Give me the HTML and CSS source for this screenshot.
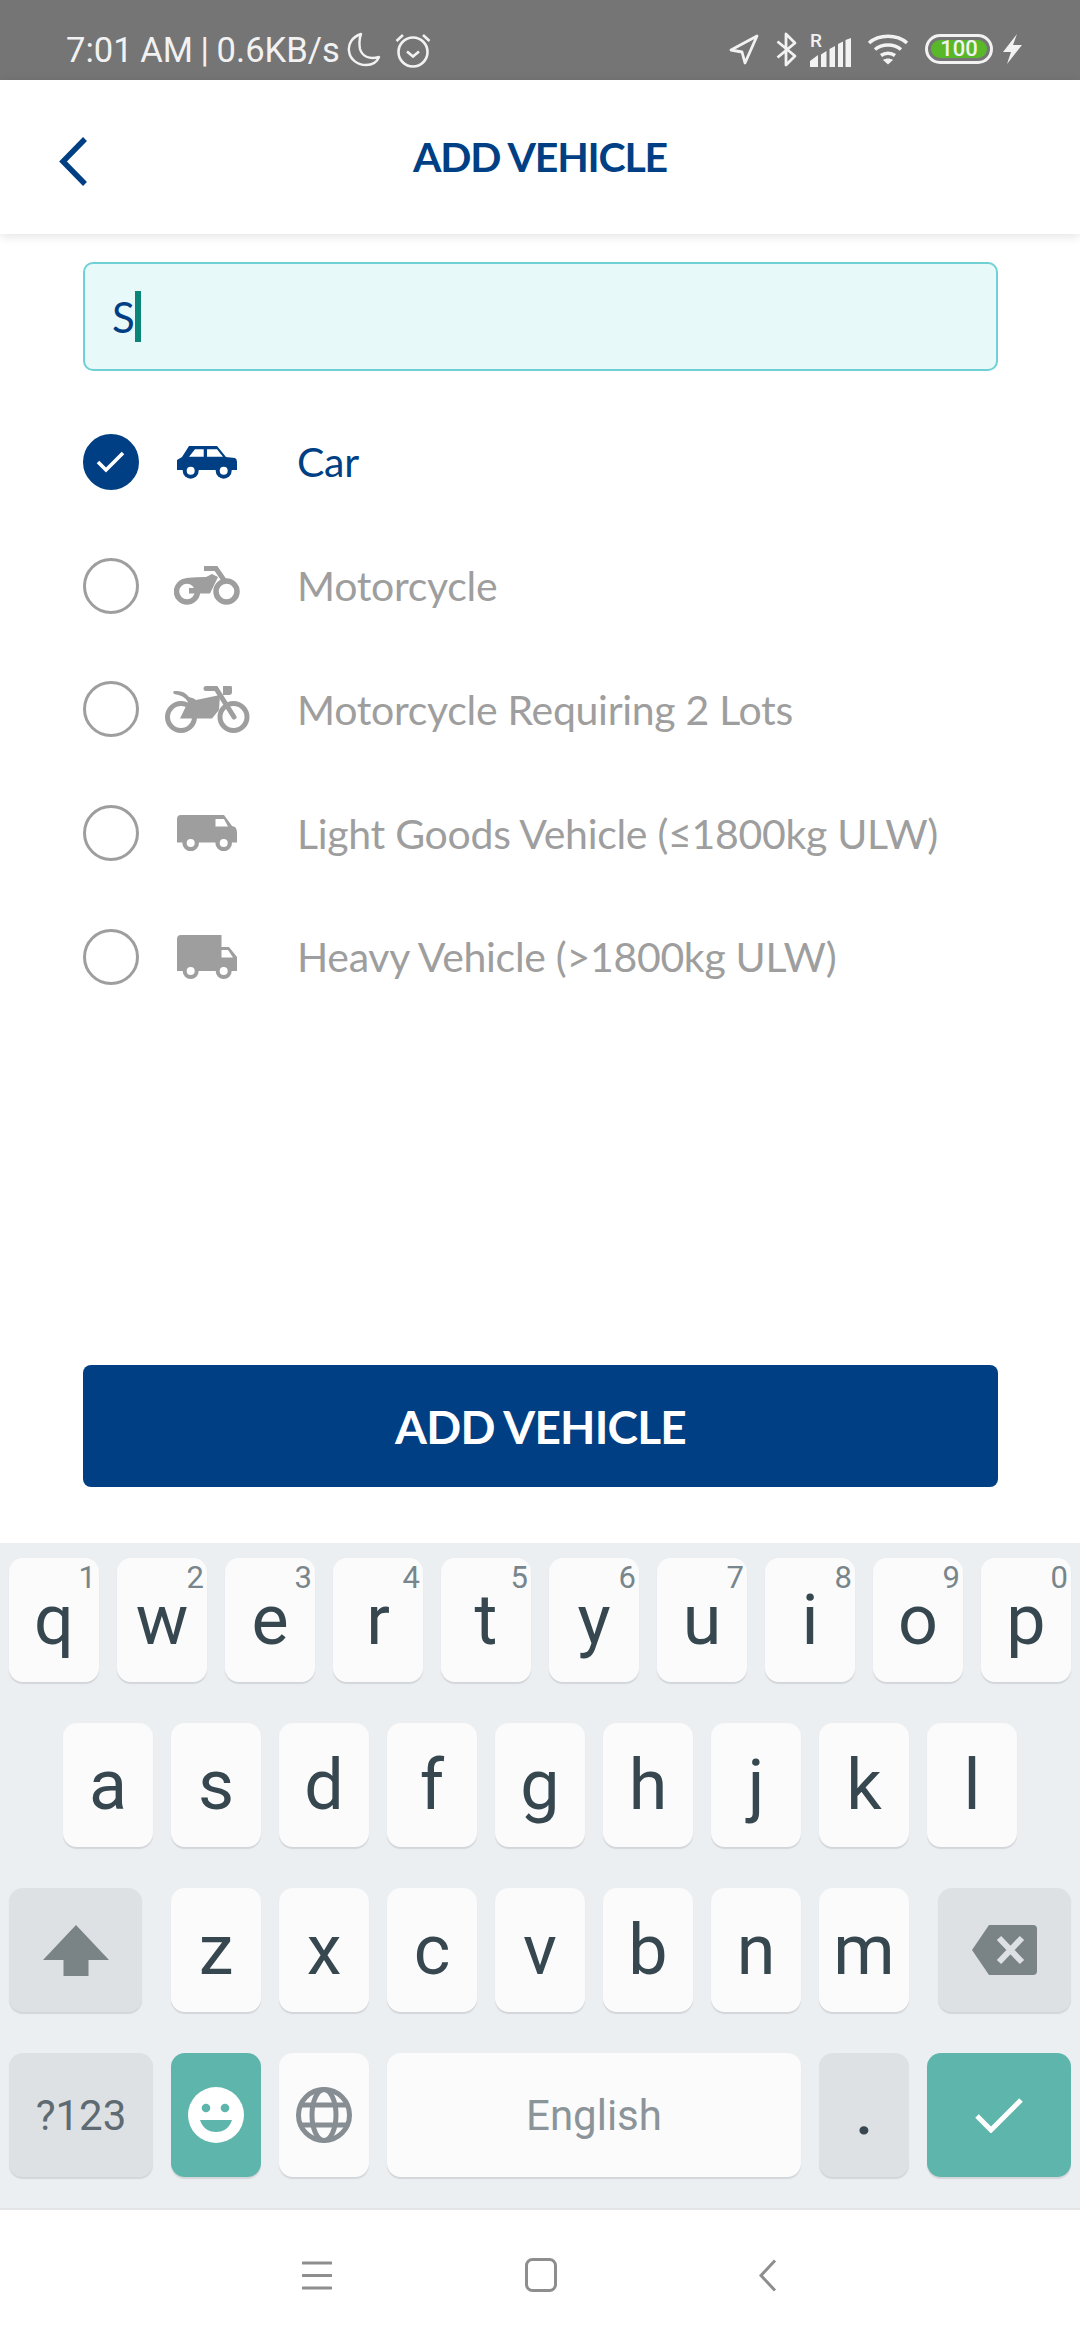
FILE: index.html
```html
<!DOCTYPE html>
<html lang="en">
<head>
    <meta charset="UTF-8">
    <meta name="viewport" content="width=device-width, initial-scale=1.0">
    <title>Add Vehicle</title>
    <link rel="stylesheet" href="styles.css">
</head>
<body>

<div class="statusbar">
    <div class="status-left">
        <span class="status-text">7:01 AM | 0.6KB/s</span>
        <svg class="ic-moon" width="34" height="35" viewBox="0 0 34 35"><path d="M14 2 C5 5 1 12 2 19 C3 28 11 33 19 33 C25 33 30 30 32 25 C22 28 15 24 13 17 C12 11 12 7 14 2 Z" fill="none" stroke="#f2f2f2" stroke-width="2.4" stroke-linejoin="round"/></svg>
        <svg class="ic-alarm" width="36" height="36" viewBox="0 0 36 36"><circle cx="18" cy="20" r="14.5" fill="none" stroke="#f2f2f2" stroke-width="2.6"/><path d="M12 19.5 L18 24.5 L24 19.5" fill="none" stroke="#f2f2f2" stroke-width="2.6"/><path d="M1.5 9 L8 3 M34.5 9 L28 3" stroke="#f2f2f2" stroke-width="2.6"/></svg>
    </div>
    <div class="status-right">
        <svg width="30" height="31" viewBox="0 0 30 31"><path d="M28 2 L2 16 L13 18 L16 29 Z" fill="none" stroke="#f2f2f2" stroke-width="2.8" stroke-linejoin="round"/></svg>
        <svg class="ic-bt" width="21" height="35" viewBox="0 0 21 35"><path d="M1.5 9.5 L19 24 L10 33 L10 2 L19 11 L1.5 25.5" fill="none" stroke="#f2f2f2" stroke-width="2.8" stroke-linejoin="round"/></svg>
        <div class="signal">
            <span class="signal-r">R</span>
            <svg width="42" height="29" viewBox="0 0 42 29"><path d="M0 29 V23 L8 17 V29 Z M11 29 V16.5 L16.5 13 V29 Z M19.5 29 V11 L25 8 V29 Z M28 29 V6 L33 3.5 V29 Z M35.5 29 V2 L41 0 V29 Z" fill="#f2f2f2"/></svg>
        </div>
        <svg class="ic-wifi" width="42" height="31" viewBox="0 0 42 31"><path d="M2 9 C12 0 30 0 40 9 M8 15.5 C15 9.5 27 9.5 34 15.5 M14 21.5 C18 18.5 24 18.5 28 21.5" fill="none" stroke="#f2f2f2" stroke-width="3.6"/><path d="M21 30.5 L16 26 C19 24 23 24 26 26 Z" fill="#f2f2f2"/></svg>
        <div class="battery"><span class="battery-fill">100</span></div>
        <svg class="ic-bolt" width="19" height="30" viewBox="0 0 19 30"><path d="M14 0 L0 18 L8 18 L4 30 L19 11 L10 11 Z" fill="#f2f2f2"/></svg>
    </div>
</div>

<header class="topbar">
    <svg class="back" width="30" height="52" viewBox="0 0 30 52"><polyline points="27,3 5,25.5 27,48" fill="none" stroke="#003f83" stroke-width="5.5"/></svg>
    <h1>ADD VEHICLE</h1>
</header>

<main class="content">
    <div class="search"><span class="search-value">S</span><span class="caret"></span></div>

    <ul class="vehicles">
        <li class="vehicle selected">
            <span class="radio"><svg width="30" height="24" viewBox="0 0 30 24"><polyline points="2,12 10,20 27,3" fill="none" stroke="#fff" stroke-width="3.6"/></svg></span>
            <span class="vehicle-icon">
                <svg width="60" height="34" viewBox="0 0 60 34"><path d="M12 1 H40 L49 12 L58 13 Q60 14 60 17 V25 H0 V15 L5 12 Z" fill="#003f83"/><path d="M12 11.7 L18 4.3 H26.7 V11.7 Z M30 4.3 H40 L46 11.7 H30 Z" fill="#fff"/><circle cx="13.7" cy="25.7" r="8" fill="#003f83"/><circle cx="13.7" cy="25.7" r="4" fill="#fff"/><circle cx="46.7" cy="25.7" r="8" fill="#003f83"/><circle cx="46.7" cy="25.7" r="4" fill="#fff"/></svg>
            </span>
            <span class="vehicle-name">Car</span>
        </li>
        <li class="vehicle">
            <span class="radio"></span>
            <span class="vehicle-icon">
                <svg width="66" height="39" viewBox="0 0 66 39"><circle cx="13" cy="25.5" r="10.5" fill="none" stroke="#9e9e9e" stroke-width="5.5"/><circle cx="52.5" cy="25.5" r="10.5" fill="none" stroke="#9e9e9e" stroke-width="5.5"/><path d="M12 12 Q22 11 32 11 L38 8 L44 11 L36 27.5 H15 V22 H22 V17 H12 Z" fill="#9e9e9e"/><path d="M30 2.5 H42 L52 17" fill="none" stroke="#9e9e9e" stroke-width="5"/></svg>
            </span>
            <span class="vehicle-name">Motorcycle</span>
        </li>
        <li class="vehicle">
            <span class="radio"></span>
            <span class="vehicle-icon">
                <svg width="85" height="48" viewBox="0 0 85 48"><circle cx="16" cy="32" r="13.5" fill="none" stroke="#9e9e9e" stroke-width="5"/><circle cx="68.5" cy="32" r="13.5" fill="none" stroke="#9e9e9e" stroke-width="5"/><path d="M24 12 Q29 13 31 15 L55 10 L54 25 L47 33.5 H15 L23 17 Q19 10 9 9 Q7 6 10 6 Q19 5 24 12 Z" fill="#9e9e9e"/><path d="M41 3.5 H51 L69 32" fill="none" stroke="#9e9e9e" stroke-width="5" stroke-linecap="round"/><path d="M58 1 H66 Q67 1 67 3 V7 Q67 10 64 10 H58 Z" fill="#9e9e9e"/></svg>
            </span>
            <span class="vehicle-name">Motorcycle Requiring 2 Lots</span>
        </li>
        <li class="vehicle">
            <span class="radio"></span>
            <span class="vehicle-icon">
                <svg width="60" height="36" viewBox="0 0 60 36"><path d="M4 0 H47 L55 11 L58 12 Q60 14 60 17 V27.5 H0 V4 Q0 0 4 0 Z" fill="#9e9e9e"/><path d="M38.5 4 H47 L51 11.5 H38.5 Z" fill="#fff"/><circle cx="13.7" cy="28" r="8.3" fill="#9e9e9e"/><circle cx="13.7" cy="28" r="4" fill="#fff"/><circle cx="46.7" cy="28" r="8.3" fill="#9e9e9e"/><circle cx="46.7" cy="28" r="4" fill="#fff"/></svg>
            </span>
            <span class="vehicle-name">Light Goods Vehicle (≤1800kg ULW)</span>
        </li>
        <li class="vehicle">
            <span class="radio"></span>
            <span class="vehicle-icon">
                <svg width="60" height="44" viewBox="0 0 60 44"><path d="M4 0 H44.5 V12 H52 L60 22 V36 H0 V4 Q0 0 4 0 Z" fill="#9e9e9e"/><path d="M44.5 15 H51 L56 22.5 H44.5 Z" fill="#fff"/><circle cx="13.7" cy="36" r="8" fill="#9e9e9e"/><circle cx="13.7" cy="36" r="4" fill="#fff"/><circle cx="46.7" cy="36" r="8" fill="#9e9e9e"/><circle cx="46.7" cy="36" r="4" fill="#fff"/></svg>
            </span>
            <span class="vehicle-name">Heavy Vehicle (&gt;1800kg ULW)</span>
        </li>
    </ul>

    <button class="add-btn" type="button">ADD VEHICLE</button>
</main>

<section class="keyboard">
    <div class="kb-row">
        <div class="key">q<span class="hint">1</span></div>
        <div class="key">w<span class="hint">2</span></div>
        <div class="key">e<span class="hint">3</span></div>
        <div class="key">r<span class="hint">4</span></div>
        <div class="key">t<span class="hint">5</span></div>
        <div class="key">y<span class="hint">6</span></div>
        <div class="key">u<span class="hint">7</span></div>
        <div class="key">i<span class="hint">8</span></div>
        <div class="key">o<span class="hint">9</span></div>
        <div class="key">p<span class="hint">0</span></div>
    </div>
    <div class="kb-row kb-row-home">
        <div class="key">a</div>
        <div class="key">s</div>
        <div class="key">d</div>
        <div class="key">f</div>
        <div class="key">g</div>
        <div class="key">h</div>
        <div class="key">j</div>
        <div class="key">k</div>
        <div class="key">l</div>
    </div>
    <div class="kb-row">
        <div class="key key-fn key-shift">
            <svg width="66" height="51" viewBox="0 0 66 51"><path d="M33 0 L66 35 H45.5 V51 H20.5 V35 H0 Z" fill="#7a8487"/></svg>
        </div>
        <div class="key">z</div>
        <div class="key">x</div>
        <div class="key">c</div>
        <div class="key">v</div>
        <div class="key">b</div>
        <div class="key">n</div>
        <div class="key">m</div>
        <div class="key key-fn key-back">
            <svg width="65" height="50" viewBox="0 0 65 50"><path d="M17 0 H61 Q65 0 65 4 V46 Q65 50 61 50 H17 L0 25 Z" fill="#7a8487"/><path d="M27 13 L50 37 M50 13 L27 37" stroke="#dee1e4" stroke-width="6"/></svg>
        </div>
    </div>
    <div class="kb-row">
        <div class="key key-fn key-wide key-label">?123</div>
        <div class="key key-teal">
            <svg width="56" height="56" viewBox="0 0 56 56"><circle cx="28" cy="28" r="28" fill="#fff"/><circle cx="18" cy="21" r="4.3" fill="#5eb5ab"/><circle cx="37" cy="21" r="4.3" fill="#5eb5ab"/><path d="M12 33 H44 Q40 45 28 45 Q16 45 12 33 Z" fill="#5eb5ab"/></svg>
        </div>
        <div class="key">
            <svg width="56" height="56" viewBox="0 0 56 56"><circle cx="28" cy="28" r="25.5" fill="none" stroke="#868e93" stroke-width="5"/><ellipse cx="28" cy="28" rx="12" ry="25.5" fill="none" stroke="#868e93" stroke-width="5"/><path d="M4 18 H52 M4 38 H52" stroke="#868e93" stroke-width="5"/></svg>
        </div>
        <div class="key key-space">English</div>
        <div class="key key-fn key-period">.</div>
        <div class="key key-teal key-wide">
            <svg width="48" height="36" viewBox="0 0 48 36"><polyline points="2,19 16,33 46,3" fill="none" stroke="#fff" stroke-width="5"/></svg>
        </div>
    </div>
</section>

<nav class="navbar">
    <svg class="nav-menu" width="30" height="31" viewBox="0 0 30 31"><path d="M1 3 H29 M1 15.5 H29 M1 28 H29" stroke="#8e8e8e" stroke-width="3" stroke-linecap="round"/></svg>
    <svg class="nav-home" width="32" height="34" viewBox="0 0 32 34"><rect x="1.5" y="1.5" width="29" height="31" rx="6" fill="none" stroke="#8e8e8e" stroke-width="3"/></svg>
    <svg class="nav-back" width="18" height="33" viewBox="0 0 18 33"><polyline points="16,1.5 2,16.5 16,31.5" fill="none" stroke="#8e8e8e" stroke-width="3"/></svg>
</nav>

</body>
</html>
```

FILE: styles.css
```css
* { box-sizing: border-box; }
html, body { margin: 0; padding: 0; }
body { width: 1080px; height: 2340px; display: flex; flex-direction: column; overflow: hidden; background: #fff; font-family: "Lato", sans-serif; }

.statusbar { height: 80px; flex: none; background: #757575; color: #f2f2f2; display: flex; justify-content: space-between; padding: 32px 58px 0 66px; }
.status-left, .status-right { display: flex; align-items: flex-start; }
.status-text { font-family: "Roboto", sans-serif; font-size: 34.6px; line-height: 36px; word-spacing: -1px; }
.ic-moon { margin-left: 7px; }
.ic-alarm { margin-left: 14px; }
.status-right svg { display: block; margin-top: 2px; }
.status-right .ic-bt { margin: 0 0 0 17px; }
.signal { position: relative; width: 42px; height: 34px; margin-left: 13px; }
.signal svg { position: absolute; left: 0; bottom: -1px; }
.signal-r { position: absolute; left: 0; top: -2px; font-family: "Roboto", sans-serif; font-size: 19px; font-weight: 500; line-height: 22px; }
.ic-wifi { margin-left: 15px; }
.battery { width: 68px; height: 30px; margin: 2px 0 0 16px; padding: 3px; border: 3px solid #f2f2f2; border-radius: 15px; }
.battery-fill { display: block; height: 18px; border-radius: 9px; background: #59b82a; color: #f2f2f2; font-family: "Roboto", sans-serif; font-size: 22px; font-weight: 500; line-height: 18px; text-align: center; }
.status-right .ic-bolt { margin-left: 10px; }

.topbar { height: 154px; flex: none; position: relative; z-index: 1; display: flex; align-items: center; justify-content: center; background: #fff; box-shadow: 0 2px 10px rgba(0, 0, 0, 0.12); }
.back { position: absolute; left: 58px; top: 56px; }
.topbar h1 { margin: 0; color: #003f83; font-size: 41px; font-weight: 700; letter-spacing: -1.2px; line-height: 50px; }

.content { height: 1309px; flex: none; display: flex; flex-direction: column; padding: 28px 82px 56px 83px; }
.search { height: 109px; flex: none; display: flex; align-items: center; padding-left: 27px; background: #e8f9fa; border: 2px solid #6fd0d6; border-radius: 10px; color: #003f83; font-size: 42px; }
.caret { width: 6px; height: 51px; background: #0b8577; }

.vehicles { list-style: none; margin: 29px 0 0; padding: 0; }
.vehicle { height: 123.75px; display: flex; align-items: center; color: #9e9e9e; font-size: 41px; letter-spacing: -0.3px; }
.vehicle.selected { color: #003f83; }
.radio { width: 56px; height: 56px; flex: none; display: flex; align-items: center; justify-content: center; border: 3px solid #9e9e9e; border-radius: 50%; }
.selected .radio { background: #003f83; border-color: #003f83; }
.vehicle-icon { width: 100px; flex: none; margin: 0 40px 0 18px; display: flex; justify-content: center; }
.vehicle-icon svg { display: block; }

.add-btn { height: 122px; flex: none; margin-top: auto; background: #003f83; border: 0; border-radius: 8px; color: #fff; font-family: inherit; font-size: 46px; font-weight: 700; letter-spacing: -0.8px; }

.keyboard { height: 667px; flex: none; display: flex; flex-direction: column; gap: 41px; padding: 15px 9px 0; background: #ebeff2; border-bottom: 2px solid #e2e4e6; font-family: "Roboto", sans-serif; }
.kb-row { display: flex; gap: 18px; }
.kb-row-home { padding-left: 54px; }
.key { position: relative; width: 90px; height: 124px; flex: none; display: flex; align-items: center; justify-content: center; background: #fbfbfb; border-radius: 14px; box-shadow: 0 2px 1px #d3d6d9; color: #37474f; font-size: 70px; }
.hint { position: absolute; right: 3px; top: 2px; color: #78868c; font-size: 31px; line-height: 36px; }
.key-fn { background: #dee1e4; }
.key-shift { width: 133px; margin-right: 11px; }
.key-back { width: 133px; margin-left: 11px; }
.key-wide { width: 144px; }
.key-label { color: #5f6b72; font-size: 42px; }
.key-teal { background: #5eb5ab; }
.key-space { width: 414px; color: #8b9499; font-size: 42px; }
.key-period { font-size: 56px; font-weight: 700; }

.navbar { height: 130px; flex: none; display: flex; align-items: center; padding-left: 302px; background: #fff; }
.navbar svg { display: block; }
.nav-home { margin-left: 193px; }
.nav-back { margin-left: 202px; }
```
